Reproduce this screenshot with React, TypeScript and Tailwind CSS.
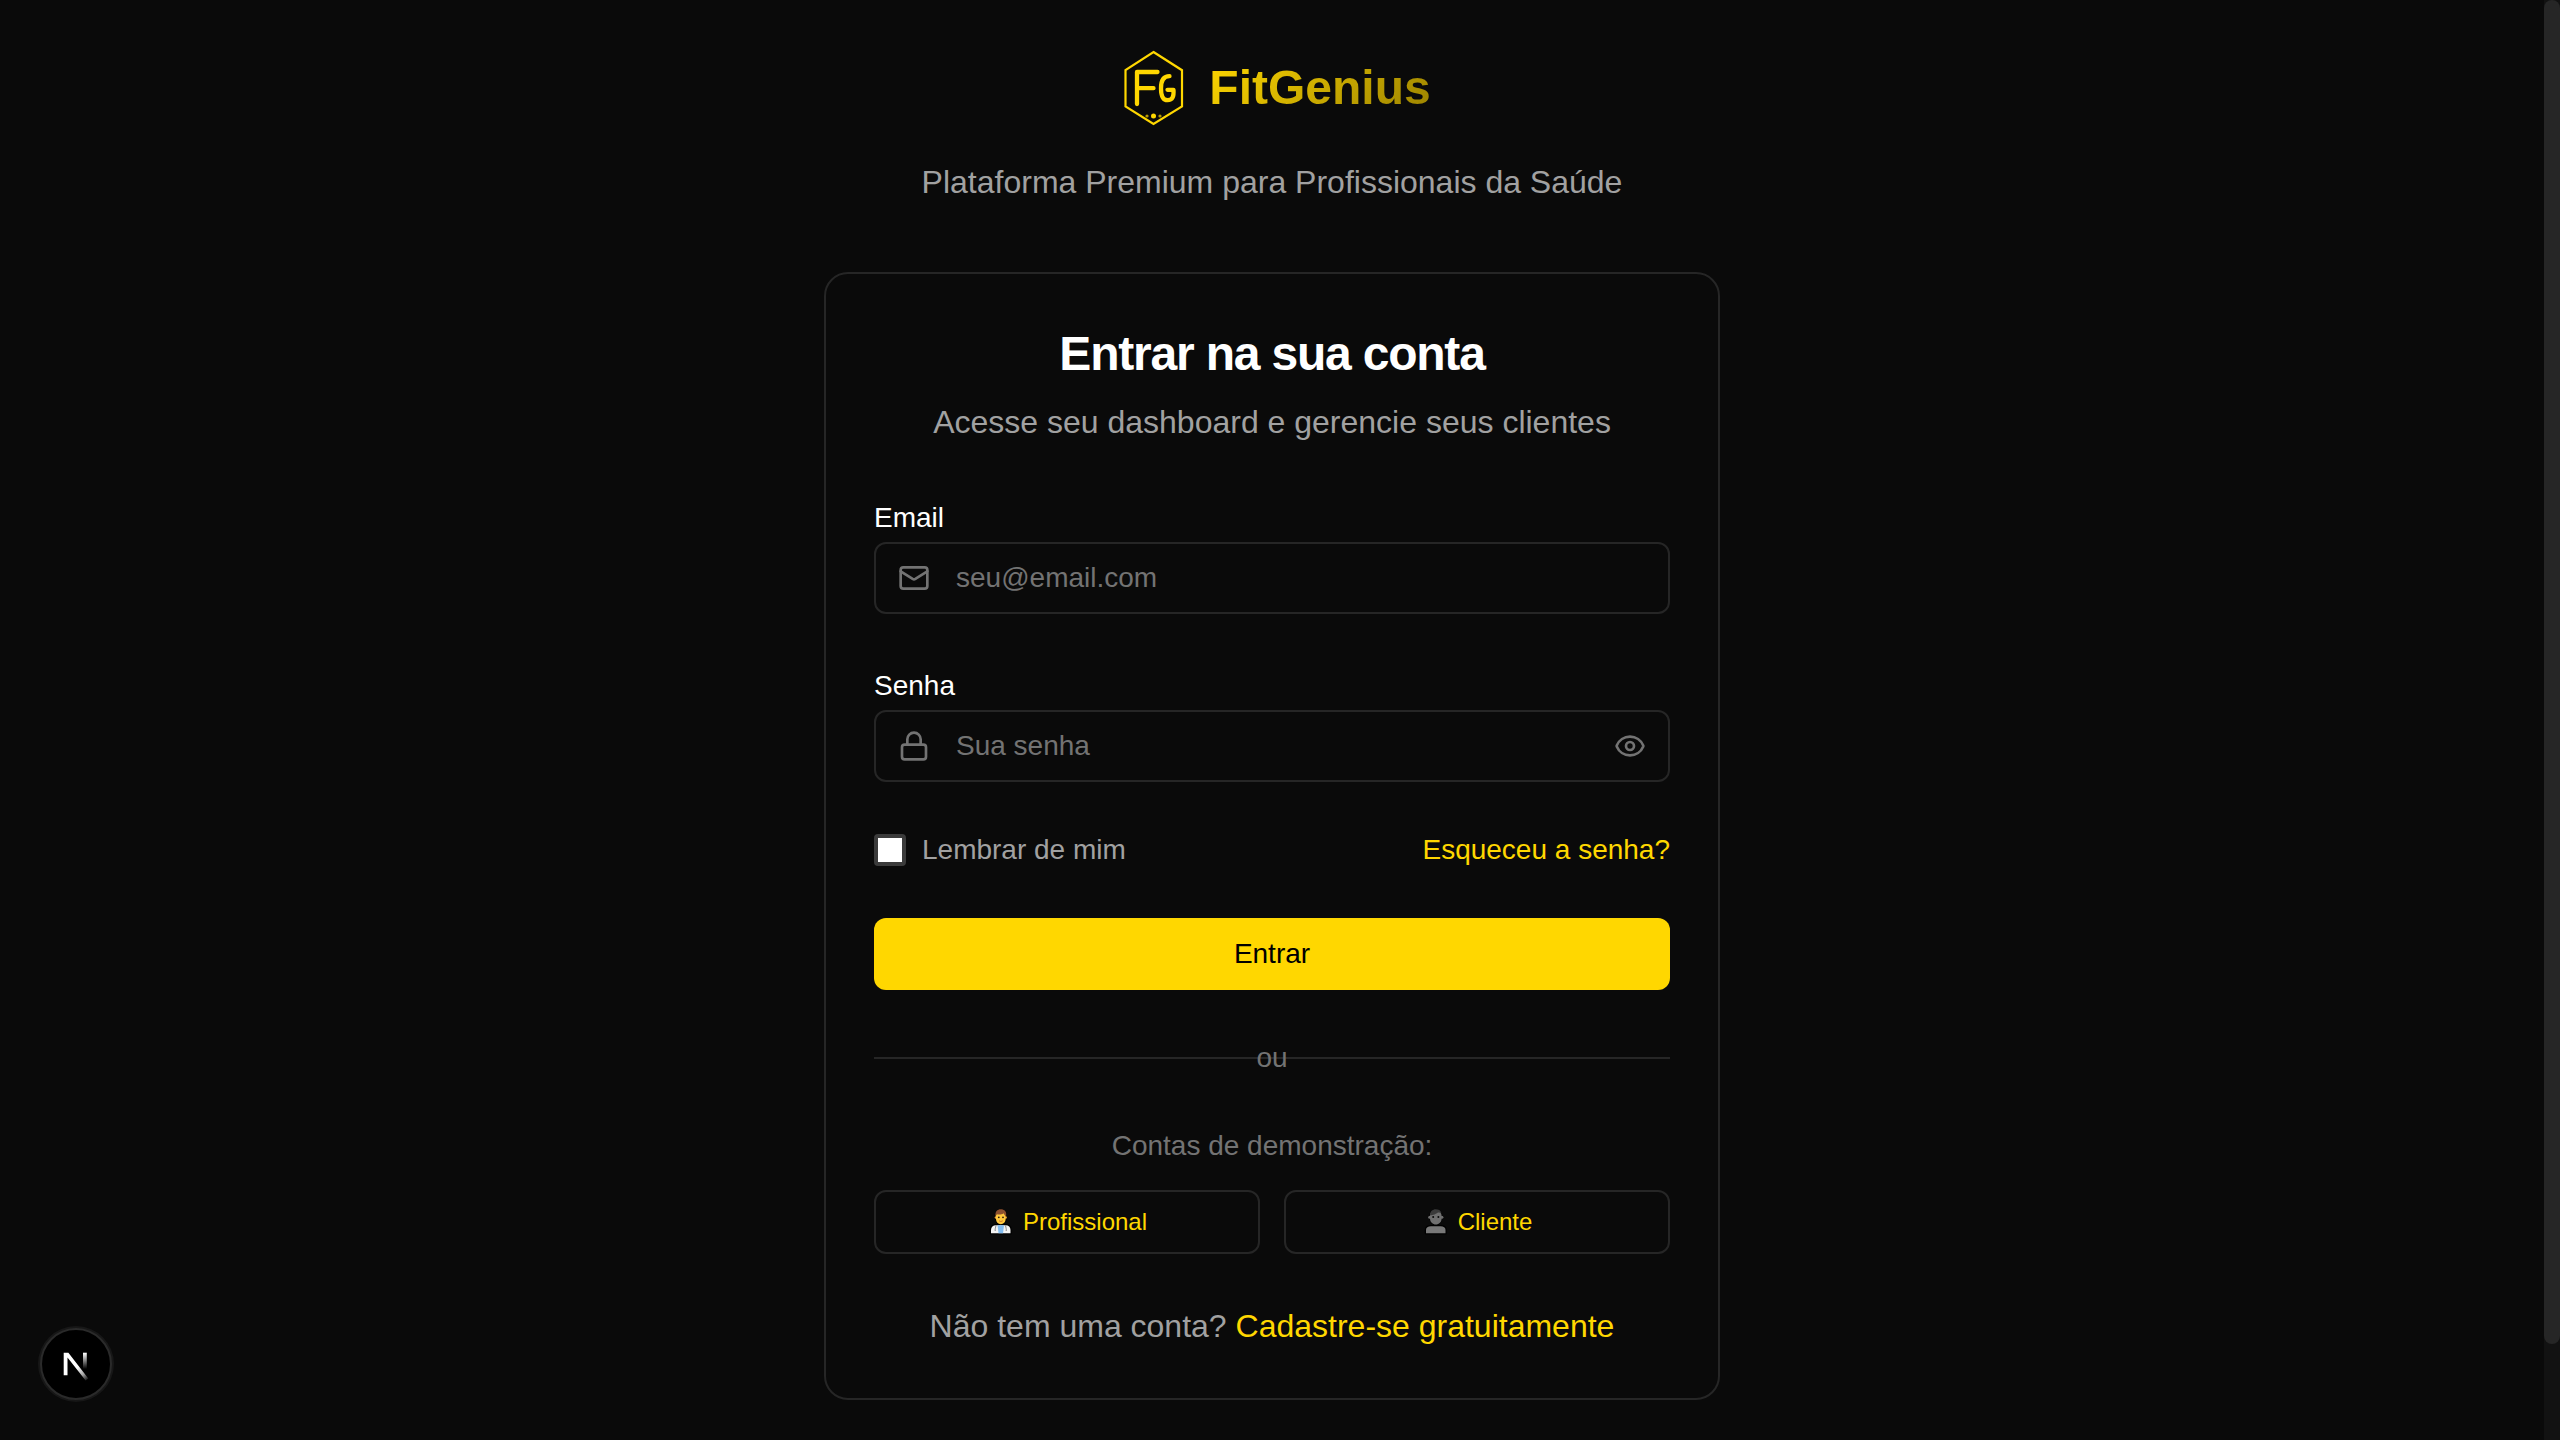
import { useState } from "react";
import { Eye, Lock, Mail } from "lucide-react";

function FitGeniusLogo() {
  return (
    <svg viewBox="0 0 80 80" className="size-20" fill="none" stroke="#ffd700" strokeLinecap="round" strokeLinejoin="round" aria-hidden="true">
      <path d="M40.500 4 69 22.200V58.500L40.500 76 12.500 58.500V22.200Z" strokeWidth="2.200" strokeLinejoin="miter" />
      <path d="M24 56V24H44.500M24 40.200H40.500" strokeWidth="4.300" />
      <path d="M56.500 28.200C51 28.200 48 32 48 40.200C48 48 50.500 52.200 54.500 52.200C59.500 52.200 61 48.500 60.500 41.800H54.500" strokeWidth="4.300" />
      <g fill="#ffd700" stroke="none">
        <circle cx="40.500" cy="68" r="2.500" />
        <circle cx="34" cy="68" r="1.600" opacity="0.7" />
        <circle cx="47" cy="68" r="1.600" opacity="0.7" />
      </g>
    </svg>
  );
}

function NextBadge() {
  return (
    <button
      type="button"
      aria-label="Open Next.js Dev Tools"
      className="fixed bottom-10 left-10 flex size-18 items-center justify-center rounded-full border-2 border-[#2a2a2a] bg-black ring-2 ring-[#171717]"
    >
      <svg viewBox="0 0 32 32" className="size-8 shrink-0 overflow-visible" aria-hidden="true">
        <defs>
          <linearGradient id="diag" x1="18" y1="19" x2="27" y2="31" gradientUnits="userSpaceOnUse">
            <stop stopColor="#fff" />
            <stop offset="0.600" stopColor="#fff" stopOpacity="0.650" />
            <stop offset="1" stopColor="#fff" stopOpacity="0.150" />
          </linearGradient>
          <linearGradient id="stem" x1="25" y1="5" x2="25" y2="21" gradientUnits="userSpaceOnUse">
            <stop stopColor="#fff" />
            <stop offset="1" stopColor="#fff" stopOpacity="0" />
          </linearGradient>
        </defs>
        <path d="M3.700 4.700H8.400L28.300 30.400 25.600 32.600 7.500 9.400V27.300H3.700Z" fill="url(#diag)" />
        <path d="M23 4.700H26.800V21H23Z" fill="url(#stem)" />
      </svg>
    </button>
  );
}

function DoctorIcon() {
  return (
    <svg viewBox="0 0 28 28" className="size-7" role="img" aria-label="Profissional de saúde">
      <g stroke="#000" strokeWidth="2.400" strokeLinejoin="round" fill="#000">
        <ellipse cx="13.800" cy="9" rx="5" ry="7" />
        <path d="M4 25.300V22C4 19 6 17.300 9 17.300H18.600C21.600 17.300 23.500 19 23.500 22V25.300Z" />
      </g>
      <circle cx="8.900" cy="9.500" r="1.200" fill="#e8a33a" />
      <circle cx="18.700" cy="9.500" r="1.200" fill="#e8a33a" />
      <path d="M9 8C9 4.500 11 3 13.800 3S18.600 4.500 18.600 8V11C18.600 14 16.500 16.200 13.800 16.200S9 14 9 11Z" fill="#ffc83d" />
      <path d="M8.500 8.500C7.800 3.500 10.300 1.300 13.800 1.300C17.500 1.300 20 3.800 19.100 8.500C17.800 8 17.300 6.300 16.600 5.200C14.500 7 11.500 6.600 9.800 6.300Z" fill="#8d5130" />
      <circle cx="11.800" cy="9.300" r="0.900" fill="#2b1a10" />
      <circle cx="16" cy="9.300" r="0.900" fill="#2b1a10" />
      <path d="M12 12.800Q13.900 14.300 15.800 12.800" fill="none" stroke="#c8702c" strokeWidth="0.900" />
      <path d="M4 25.300V22C4 19 6 17.300 9 17.300H18.600C21.600 17.300 23.500 19 23.500 22V25.300Z" fill="#f4f4f4" />
      <path d="M10.500 17.300H17L16 25.300H11.500Z" fill="#83bdf0" />
      <path d="M9 17.500C8.500 20 8 21 8.200 23M18.500 17.500C19 20 19.500 21 19.200 23" fill="none" stroke="#777" strokeWidth="0.900" />
    </svg>
  );
}

function PersonIcon() {
  return (
    <svg viewBox="0 0 28 28" className="size-7" role="img" aria-label="Pessoa">
      <g stroke="#000" strokeWidth="2.400" strokeLinejoin="round" fill="#000">
        <ellipse cx="13.800" cy="9" rx="5.500" ry="7" />
        <path d="M4 25.300V22C4 19.500 6 18.300 9 18.300H18.600C21.600 18.300 23.500 19.500 23.500 22V25.300Z" />
      </g>
      <circle cx="7.700" cy="9.200" r="1.500" fill="#707070" />
      <circle cx="19.900" cy="9.200" r="1.500" fill="#707070" />
      <path d="M8 8C8 4.500 10.500 2.500 13.800 2.500S19.600 4.500 19.600 8V10.500C19.600 14 17 16.500 13.800 16.500S8 14 8 10.500Z" fill="#707070" />
      <path d="M8 7.200C8 3.600 10.300 1.300 13.800 1.300C17 1.300 19 2.800 19.600 5.500C17 3.500 15.300 4.600 13.800 5.800C12 7 10.200 7.400 8 7.200Z" fill="#3b3b3b" />
      <circle cx="11.200" cy="9" r="1" fill="#0a0a0a" />
      <circle cx="16.400" cy="9" r="1" fill="#0a0a0a" />
      <path d="M4 25.300V22C4 19.500 6 18.300 9 18.300H18.600C21.600 18.300 23.500 19.500 23.500 22V25.300Z" fill="#787878" />
    </svg>
  );
}

const inputClass =
  "h-18 w-full rounded-xl border-2 border-[#262626] bg-transparent px-20 text-[28px] leading-10 text-white placeholder:text-[#737373] outline-none focus:border-[#ffd700]";
const demoClass =
  "flex h-16 items-center justify-center gap-2 rounded-xl border-2 border-[#262626] text-2xl text-[#ffd700]";

export default function App() {
  const [showPassword, setShowPassword] = useState(false);

  return (
    <div className="flex min-h-screen bg-[#0a0a0a] font-['Liberation_Sans',Arial,sans-serif] text-white">
      <main className="flex flex-1 flex-col items-center px-8 pt-12 pb-10">
        <header className="mb-16 text-center">
          <div className="mb-7 flex items-center justify-center gap-4">
            <FitGeniusLogo />
            <span className="bg-[linear-gradient(135deg,#ffd700,#998100)] bg-clip-text text-5xl leading-16 font-bold text-transparent">
              FitGenius
            </span>
          </div>
          <p className="text-[32px] leading-13 text-[#a1a1a1]">Plataforma Premium para Profissionais da Saúde</p>
        </header>

        <section className="w-full max-w-4xl rounded-3xl border-2 border-[#262626] p-12">
          <div className="mb-13 text-center">
            <h1 className="mb-3 text-5xl leading-16 font-bold tracking-tight">Entrar na sua conta</h1>
            <p className="text-[32px] leading-12 text-[#a1a1a1]">Acesse seu dashboard e gerencie seus clientes</p>
          </div>

          <form onSubmit={(e) => e.preventDefault()}>
            <div className="mb-13">
              <label htmlFor="email" className="mb-1 block text-[28px] leading-10">Email</label>
              <div className="relative">
                <Mail className="pointer-events-none absolute top-5 left-6 size-8 text-[#737373]" />
                <input id="email" type="email" placeholder="seu@email.com" className={inputClass} />
              </div>
            </div>

            <div className="mb-12">
              <label htmlFor="senha" className="mb-1 block text-[28px] leading-10">Senha</label>
              <div className="relative">
                <Lock className="pointer-events-none absolute top-5 left-6 size-8 text-[#737373]" />
                <input id="senha" type={showPassword ? "text" : "password"} placeholder="Sua senha" className={inputClass} />
                <button
                  type="button"
                  aria-label="Mostrar senha"
                  onClick={() => setShowPassword(!showPassword)}
                  className="absolute top-5 right-6 text-[#737373]"
                >
                  <Eye className="size-8" />
                </button>
              </div>
            </div>

            <div className="mb-12 flex items-center justify-between text-[28px] leading-10">
              <label className="flex items-center gap-4 text-[#a1a1a1]">
                <input
                  type="checkbox"
                  className="size-8 appearance-none rounded-sm border-4 border-[#3b3b3b] bg-white checked:bg-[#ffd700]"
                />
                Lembrar de mim
              </label>
              <a href="#recuperar" className="text-[#ffd700]">Esqueceu a senha?</a>
            </div>

            <button type="submit" className="h-18 w-full rounded-xl bg-[#ffd700] text-[28px] leading-10 text-black">
              Entrar
            </button>
          </form>

          <div className="relative my-12 flex flex-col justify-center text-center text-[28px] leading-10 text-[#737373]">
            <hr className="absolute inset-x-0 border-t-2 border-[#262626]" />
            <span className="relative">ou</span>
          </div>

          <p className="mb-6 text-center text-[28px] leading-10 text-[#737373]">Contas de demonstração:</p>
          <div className="mb-12 grid grid-cols-2 gap-6">
            <button type="button" className={demoClass}>
              <DoctorIcon />
              Profissional
            </button>
            <button type="button" className={demoClass}>
              <PersonIcon />
              Cliente
            </button>
          </div>

          <p className="text-center text-[32px] leading-12 text-[#a1a1a1]">
            Não tem uma conta? <a href="#cadastro" className="text-[#ffd700]">Cadastre-se gratuitamente</a>
          </p>
        </section>
      </main>

      <div className="fixed inset-y-0 right-0 w-4 bg-[#121212]" aria-hidden="true">
        <div className="h-14/15 rounded-full bg-[#262626]" />
      </div>
      <div className="w-4 shrink-0" />
      <NextBadge />
    </div>
  );
}
